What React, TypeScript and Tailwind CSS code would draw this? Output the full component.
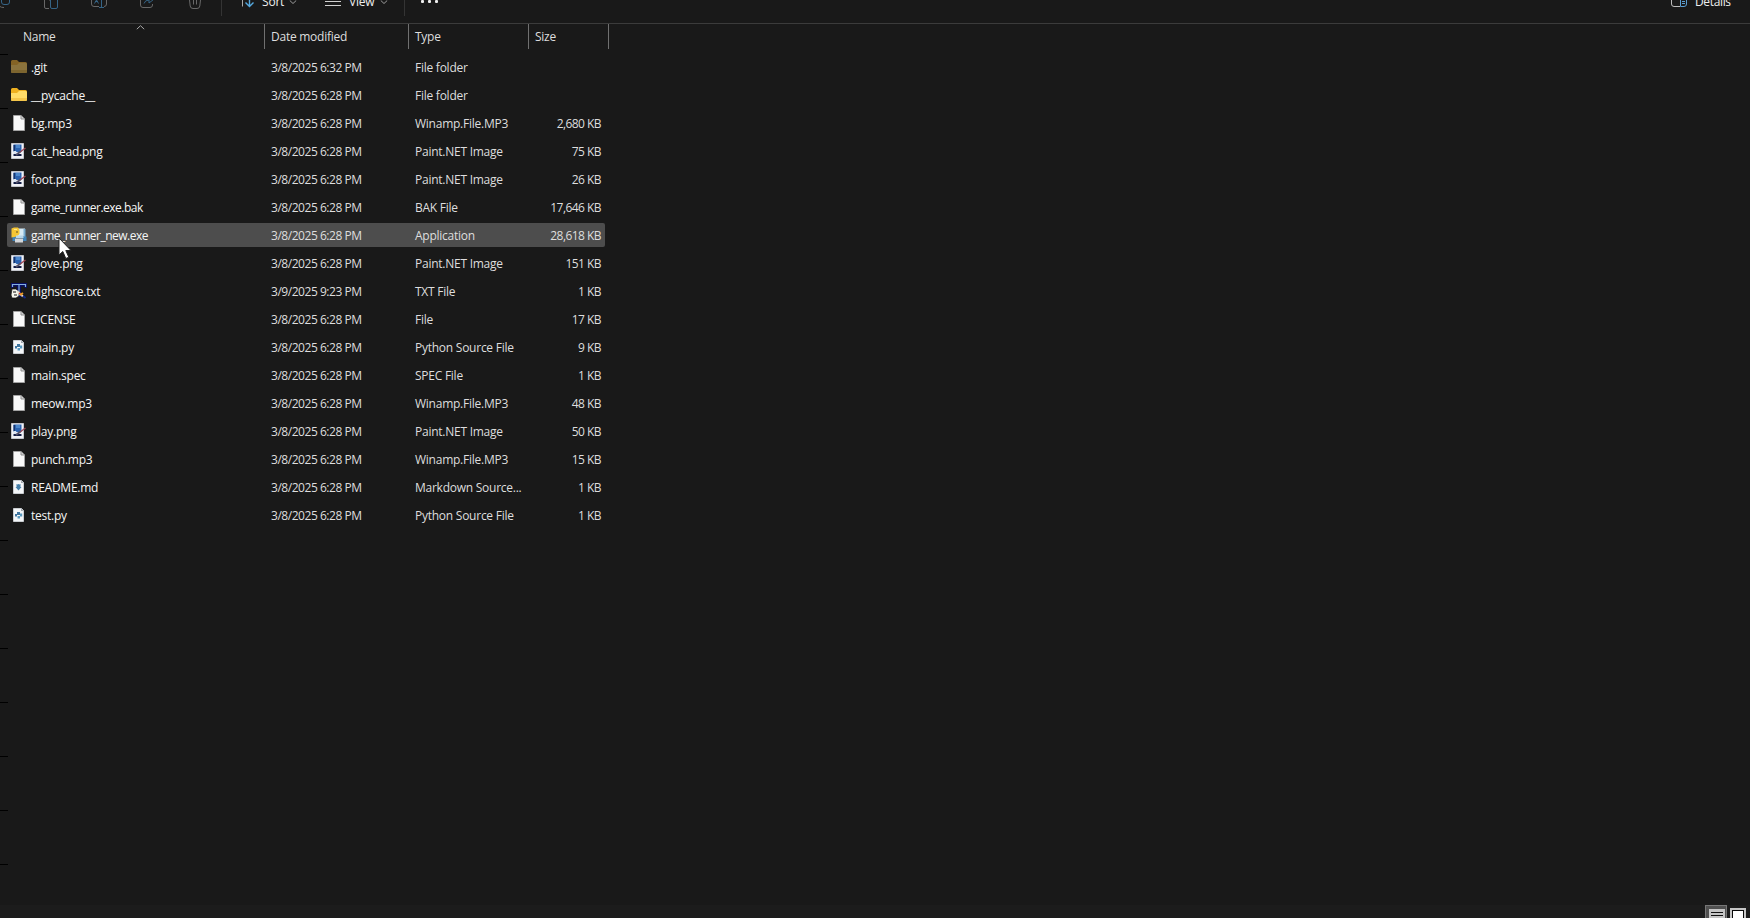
import type { ReactNode } from 'react';

type IconKind = 'git' | 'folder' | 'blank' | 'image' | 'installer' | 'text' | 'python' | 'markdown';

interface IFile {
  name: string;
  date: string;
  type: string;
  size?: string;
  icon: IconKind;
  active?: boolean;
}

const DATE = '3/8/2025 6:28 PM';

const files: IFile[] = [
  { name: '.git', date: '3/8/2025 6:32 PM', type: 'File folder', icon: 'git' },
  { name: '__pycache__', date: DATE, type: 'File folder', icon: 'folder' },
  { name: 'bg.mp3', date: DATE, type: 'Winamp.File.MP3', size: '2,680 KB', icon: 'blank' },
  { name: 'cat_head.png', date: DATE, type: 'Paint.NET Image', size: '75 KB', icon: 'image' },
  { name: 'foot.png', date: DATE, type: 'Paint.NET Image', size: '26 KB', icon: 'image' },
  { name: 'game_runner.exe.bak', date: DATE, type: 'BAK File', size: '17,646 KB', icon: 'blank' },
  { name: 'game_runner_new.exe', date: DATE, type: 'Application', size: '28,618 KB', icon: 'installer', active: true },
  { name: 'glove.png', date: DATE, type: 'Paint.NET Image', size: '151 KB', icon: 'image' },
  { name: 'highscore.txt', date: '3/9/2025 9:23 PM', type: 'TXT File', size: '1 KB', icon: 'text' },
  { name: 'LICENSE', date: DATE, type: 'File', size: '17 KB', icon: 'blank' },
  { name: 'main.py', date: DATE, type: 'Python Source File', size: '9 KB', icon: 'python' },
  { name: 'main.spec', date: DATE, type: 'SPEC File', size: '1 KB', icon: 'blank' },
  { name: 'meow.mp3', date: DATE, type: 'Winamp.File.MP3', size: '48 KB', icon: 'blank' },
  { name: 'play.png', date: DATE, type: 'Paint.NET Image', size: '50 KB', icon: 'image' },
  { name: 'punch.mp3', date: DATE, type: 'Winamp.File.MP3', size: '15 KB', icon: 'blank' },
  { name: 'README.md', date: DATE, type: 'Markdown Source...', size: '1 KB', icon: 'markdown' },
  { name: 'test.py', date: DATE, type: 'Python Source File', size: '1 KB', icon: 'python' },
];

const Folder = ({ dim }: { dim?: boolean }) => (
  <>
    <path d="M0 2.5Q0 1 1.5 1H6L8 3H14.5Q16 3 16 4.5V8H0Z" fill={dim ? '#846325' : '#eeb020'} />
    <path d="M0 6H6L8 4H14.5Q16 4 16 5.5V12.5Q16 14 14.5 14H1.5Q0 14 0 12.5Z" fill={dim ? '#8b733d' : '#ffdc68'} />
    <path d="M0 11V12.5Q0 14 1.5 14H14.5Q16 14 16 12.5V11Z" fill={dim ? '#7d652f' : '#f5c64a'} />
  </>
);

const Page = () => (
  <>
    <path d="M2.5 .5H10L13.5 4V15.5H2.5Z" fill="#f8f8f8" stroke="#a3a3a3" />
    <path d="M10 .5V4H13.5" fill="#d5d5d5" stroke="#8f8f8f" />
  </>
);

const SmallPage = () => (
  <>
    <path d="M2.5 1.5H10.5L12.5 3.5V14.5H2.5Z" fill="#f4f6f8" stroke="#c9cdd1" />
    <path d="M10 1.5V4H12.5" fill="#9da2a8" />
  </>
);

const fileIcons: Record<IconKind, ReactNode> = {
  git: <Folder dim />,
  folder: <Folder />,
  blank: <Page />,
  image: (
    <>
      <path d="M.5 .5H12.5V15.5H.5Z" fill="#f0f1f5" stroke="#c4c6cc" />
      <path d="M2.5 1.5H10.5V9H2.5Z" fill="#2c63b0" />
      <path d="M5 2H9V5H5Z" fill="#4d88cc" />
      <path d="M2.5 2H4V8H2.5Z" fill="#16356f" />
      <path d="M2.5 11H10.5V13H2.5Z" fill="#121d45" />
      <path d="M2.5 8H5L6 11H2.5Z" fill="#dbe5f2" />
      <path d="M14.5 5L9 9" stroke="#a04450" strokeWidth="1.3" />
      <path d="M9.5 8.5L5 12" stroke="#55526a" strokeWidth="2" />
    </>
  ),
  installer: (
    <>
      <path d="M5 1.5H14V9H5Z" fill="#d7eaf4" />
      <path d="M12.5 2H14.5V13H12.5Z" fill="#79aed2" />
      <path d="M1.5 9H5V14H1.5Z" fill="#3f83b8" />
      <path d="M12 9.5H15.5V14H12Z" fill="#3f83b8" />
      <path d="M.5 1.5L3 .5H7L8.5 3V7L6 9.5L.5 10.5Z" fill="#f5c634" />
      <path d="M5 4H7V6H5Z" fill="#a88a2c" />
      <path d="M3 2H6V3H3Z" fill="#ffe98c" />
      <path d="M5 8.5H12.5V11H5Z" fill="#b8d6e8" />
      <path d="M4 11H12V15.5H4Z" fill="#d4d7da" />
      <path d="M4 11H12V12H4Z" fill="#8797a4" />
    </>
  ),
  text: (
    <>
      <path d="M0 0H16V5H13.5V3.5H10V14H6V3.5H2.5V5H0Z" fill="#081064" />
      <path d="M1 1.5H15M8 1.5V13M1.5 1V4M14.5 1V4" stroke="#83afe2" strokeWidth="1.2" />
      <path d="M1 6H5L8 9V13L5 15H1L0 12Z" fill="#f5f5ec" stroke="#111" strokeWidth=".7" />
      <path d="M2 9H5M3 12H6" stroke="#111" />
      <path d="M6 8L12 13.5" stroke="#e8e1ce" strokeWidth="1.8" />
      <path d="M8 10L11 12" stroke="#d82c20" strokeWidth="1.3" />
      <path d="M9 12L12 10" stroke="#ec9d23" strokeWidth="1.8" />
      <path d="M12 13L14.5 15" stroke="#112a88" strokeWidth="2" />
    </>
  ),
  python: (
    <>
      <SmallPage />
      <path d="M6 5H9V8H6V9.5H4V7H6Z" fill="#3f759f" />
      <path d="M9 11.5H6.5V9H9V6.5H11.2V9.5H9Z" fill="#5b9abf" />
    </>
  ),
  markdown: (
    <>
      <SmallPage />
      <path d="M5.5 5L6.5 5.6L7.5 5L8.5 5.6L9.5 5V8H10.5L7.5 11.5L4.5 8H5.5Z" fill="#467fa9" />
    </>
  ),
};

const Chevron = ({ className }: { className: string }) => (
  <svg className={className} width="8" height="5" fill="none" stroke="#9b9b9b">
    <path d="M.8 .5L4 3.5L7.2 .5" />
  </svg>
);

const Toolbar = () => (
  <div className="flex h-6 shrink-0 items-start overflow-hidden border-b border-[#3b3b3b] text-[12px]">
    <svg className="shrink-0" width="221" height="17" fill="none" stroke="#686868">
      <path d="M0 6.5Q1 7.5 4 7.5" />
      <path d="M1.5 0V2Q1.5 4.5 4 4.5H7Q9.5 4.5 9.5 2V0" stroke="#356486" />
      <path d="M49 8.5H46Q44.5 8.5 44.5 7V0M50 0V1" />
      <path d="M50.5 0V7Q50.5 8.5 52 8.5H56Q57.5 8.5 57.5 7V0" stroke="#356486" />
      <path d="M91.5 0V4Q91.5 6.5 94 6.5H99M104 6.5Q106.5 6.5 106.5 4V0" />
      <path d="M94.5 3.5L96.5 0L98.5 3.5M95 1.5H98M101.5 0V7.5M99 7.5H104" stroke="#356486" />
      <path d="M140.5 0V5Q140.5 7.5 143 7.5H150Q152.5 7.5 152.5 5V4" />
      <path d="M144 3.5Q145 0 149 0V3L153.5 -.5" stroke="#356486" />
      <path d="M189.5 0L190.2 6Q190.5 8.5 193 8.5H197Q199.5 8.5 199.8 6L200.5 0M193.5 0V4.5M196.5 0V4.5" />
    </svg>
    <div className="h-4 w-px bg-[#343434]" />
    <svg className="ml-5 shrink-0" width="14" height="9" fill="none">
      <path d="M.5 0V6.5" stroke="#aaa" />
      <path d="M7.5 0V6M3.5 2.5L7.5 6.5L11.5 2.5" stroke="#55a9df" strokeWidth="1.4" />
    </svg>
    <span className="-mt-[7px] ml-[6px] w-[27px] leading-[18px] tracking-[-0.2px] text-[#eee]">Sort</span>
    <Chevron className="shrink-0" />
    <svg className="ml-[28px] shrink-0" width="16" height="7" stroke="#d0d0d0">
      <path d="M0 1.5H16M0 5.5H16" />
    </svg>
    <span className="-mt-[7px] ml-[8px] w-[31px] leading-[18px] tracking-[-0.2px] text-[#eee]">View</span>
    <Chevron className="shrink-0" />
    <div className="ml-4 h-4 w-px bg-[#343434]" />
    <svg className="ml-4 shrink-0" width="18" height="4" fill="#eee">
      <rect width="3" height="3" rx="1" />
      <rect x="7" width="3" height="3" rx="1" />
      <rect x="14" width="3" height="3" rx="1" />
    </svg>
    <svg className="ml-auto shrink-0" width="16" height="8" fill="none">
      <path d="M.5 0V4Q.5 6.5 3 6.5H9" stroke="#bcbcbc" />
      <path d="M9.5 0V6.5H13Q15.5 6.5 15.5 4V0M11 1.5H14M11 3.5H14" stroke="#5b9ed3" />
    </svg>
    <span className="-mt-[7px] ml-2 w-[55px] leading-[18px] tracking-[-0.35px] text-[#eee]">Details</span>
  </div>
);

const ListHeader = () => (
  <div className="flex h-[25px] shrink-0 text-[12px] leading-[26px] tracking-[-0.25px] text-[#dedede]">
    <div className="relative w-[265px] border-r border-[#707070] pl-[23px]">
      Name
      <svg className="absolute top-px left-[136px]" width="9" height="5" fill="none" stroke="#aaa">
        <path d="M.8 4.2L4.5 .7L8.2 4.2" />
      </svg>
    </div>
    <div className="w-[144px] border-r border-[#707070] pl-1.5">Date modified</div>
    <div className="w-[120px] border-r border-[#707070] pl-1.5">Type</div>
    <div className="w-[80px] border-r border-[#707070] pl-1.5">Size</div>
  </div>
);

const FileRow = ({ name, date, type, size, icon, active }: IFile) => (
  <li
    className={`flex h-6 w-[598px] rounded-[2px] text-[12px] leading-[26px] whitespace-nowrap ${
      active ? 'bg-[#4d4d4d]' : ''
    }`}
  >
    <svg className="mt-1 ml-1 shrink-0" width="16" height="16">
      {fileIcons[icon]}
    </svg>
    <span
      className={`ml-1 w-[240px] text-[#f5f5f5] ${name.length > 15 ? 'tracking-[-0.5px]' : 'tracking-[-0.25px]'}`}
    >
      {name}
    </span>
    <span className="w-[144px] tracking-[-0.46px] text-[#dedede]">{date}</span>
    <span className="w-[110px] tracking-[-0.25px] text-[#dedede]">{type}</span>
    <span className="w-[76px] text-right tracking-[-0.55px] text-[#dedede]">{size}</span>
  </li>
);

const StatusBar = () => (
  <div className="flex h-[13px] shrink-0 items-start justify-end overflow-hidden bg-[#1c1c1c]">
    <svg width="45" height="13">
      <rect x=".5" y=".5" width="21" height="16" fill="#505050" stroke="#777" />
      <rect x="4" y="4" width="16" height="10" fill="#c6c6c6" />
      <path d="M6 7.5H18M6 10.5H18" stroke="#111" />
      <rect x="25" y="3" width="16" height="12" fill="#c6c6c6" />
      <rect x="27.5" y="5.5" width="11" height="12" fill="#fff" stroke="#080808" />
    </svg>
  </div>
);

const App = () => (
  <div className="relative flex h-[918px] w-[1750px] flex-col overflow-hidden bg-[#191919] font-['Open_Sans','Noto_Sans',sans-serif]">
    <Toolbar />
    <ListHeader />
    <ul className="mt-1.5 ml-[7px] flex flex-1 flex-col gap-1">
      {files.map((file) => (
        <FileRow key={file.name} {...file} />
      ))}
    </ul>
    <StatusBar />

    {/* ruler ticks over the left edge */}
    <div className="absolute top-0 left-0 flex flex-col">
      {Array.from({ length: 16 }, (_, i) => (
        <div key={i} className="mt-[53px] h-px w-2 bg-black first:mt-[54px]" />
      ))}
    </div>

    <svg className="absolute top-[237px] left-[58px]" width="14" height="24">
      <path d="M1 1V18L4.8 14.5L7.8 21.5L10.8 20.2L7.8 13.5H13Z" fill="#fff" stroke="#222" />
    </svg>
  </div>
);

export default App;
